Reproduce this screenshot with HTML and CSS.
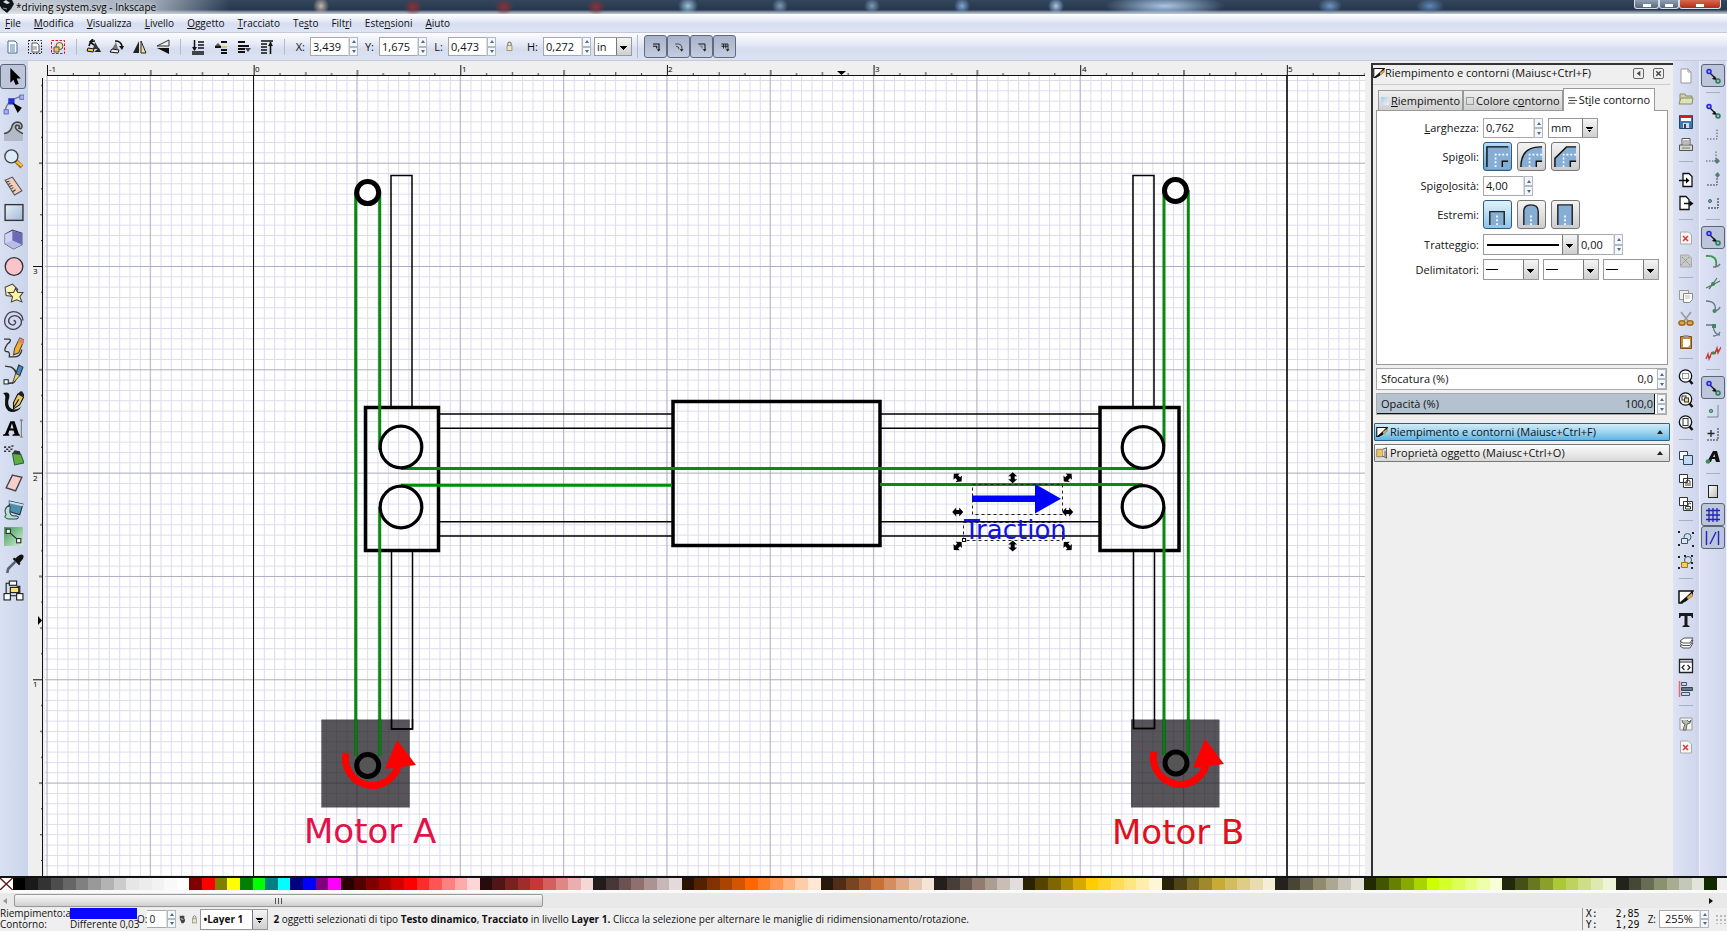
FILE: index.html
```html
<!DOCTYPE html>
<html lang="it">
<head>
<meta charset="utf-8">
<title>*driving system.svg - Inkscape</title>
<link rel="stylesheet" href="styles.css">
</head>
<body>
<svg class="defs" aria-hidden="true">
  <symbol id="i-snap" viewBox="0 0 16 16"><path d="M4 4l9 9" stroke="#111" stroke-width="1.200"/><circle cx="4" cy="3.500" r="2" fill="#aab" stroke="#22d" stroke-width="1.500"/><path d="M11 12l-4-1 3-3z" fill="#111"/><circle cx="13" cy="13" r="2" fill="#9bb" stroke="#2a7a5a" stroke-width="1.500"/></symbol>
  <symbol id="i-pen" viewBox="0 0 16 16"><path d="M1 2h14L4 14H1z" fill="#fff" stroke="#111" stroke-width="1.500"/><path d="M1 14L15 2v5L7 13z" fill="#111"/><path d="M9 8l5-4 1 3-5 4z" fill="#dba94f"/></symbol>
  <symbol id="i-doc" viewBox="0 0 16 16"><path d="M3 1h7l3 3v11H3z" fill="#fff" stroke="#999"/><path d="M10 1v3h3" fill="none" stroke="#999"/></symbol>
  <symbol id="i-mag" viewBox="0 0 16 16"><circle cx="7.500" cy="7" r="6.200" fill="#f5f8fb" stroke="#111" stroke-width="1.300"/><path d="M11.500 11.500l3 3.500" stroke="#111" stroke-width="2.500"/></symbol>
  <symbol id="i-lock" viewBox="0 0 16 16"><path d="M6 7V4q2-3 4 0v3" fill="none" stroke="#777" stroke-width="1.300"/><rect x="5" y="7" width="6" height="6" fill="#efe8b8" stroke="#887" /></symbol>
  <symbol id="i-err" viewBox="0 0 16 16"><path d="M2.500 2h8l3 3v9h-11z" fill="#fbf6f6" stroke="#aaa"/><path d="M5 6l5 5M10 6l-5 5" stroke="#d33" stroke-width="1.500"/></symbol>
</svg>

<header class="title">
  <svg viewBox="0 0 16 14" class="logo"><path d="M0 0h12l2 4-3 5-4 4-5-4-2-3z" fill="#101418"/><path d="M3 2l3-2 4 3-3 1z" fill="#dde"/><path d="M3 8l4 1" stroke="#99a"/></svg>
  <h1>*driving system.svg - Inkscape</h1>
  <div class="winbtns"><button class="wmin" aria-label="Riduci"></button><button class="wmax" aria-label="Ingrandisci"></button><button class="wclose" aria-label="Chiudi"></button></div>
</header>

<nav class="menu">
  <button><u>F</u>ile</button><button><u>M</u>odifica</button><button><u>V</u>isualizza</button><button><u>L</u>ivello</button><button><u>O</u>ggetto</button><button><u>T</u>racciato</button><button>Te<u>s</u>to</button><button>Filt<u>r</u>i</button><button>Este<u>n</u>sioni</button><button><u>A</u>iuto</button>
</nav>

<div class="toolbar">
  <div class="grp">
    <button aria-label="Seleziona tutto"><svg viewBox="0 0 16 16"><path d="M4 2h7l2 2v10H4z" fill="#fff" stroke="#4a6a8a"/><path d="M6 6h5M6 8h5M6 10h5M6 12h5" stroke="#4a88b0"/></svg></button>
    <button aria-label="Seleziona in tutti i livelli"><svg viewBox="0 0 16 16"><rect x="1.500" y="1.500" width="13" height="13" fill="none" stroke="#111" stroke-dasharray="1.500 1.500"/><path d="M5 4h5l2 2v7H5z" fill="#fff" stroke="#555"/><path d="M6 8h4M6 10h4" stroke="#777"/></svg></button>
    <button aria-label="Deseleziona"><svg viewBox="0 0 16 16"><rect x="1.500" y="1.500" width="13" height="13" fill="none" stroke="#d11" stroke-dasharray="2.500 1.500"/><circle cx="9.500" cy="7" r="3.500" fill="#f4e5a0" stroke="#555"/><path d="M4 8h5v5H4z" fill="#f0c060" stroke="#555"/></svg></button>
  </div>
  <div class="grp">
    <button aria-label="Ruota antiorario"><svg viewBox="0 0 16 16"><path d="M9 2q-5 0-6 5M7 0l-3 3 4 3" stroke="#111" stroke-width="1.600" fill="none"/><path d="M9 3l4 7H7z" fill="#333"/><path d="M2 9l6 1-1 3-6-1z" fill="#f0d050" stroke="#111"/><path d="M8 13h7l-2-4z" fill="#222"/></svg></button>
    <button aria-label="Ruota orario"><svg viewBox="0 0 16 16"><path d="M6 2q6 0 7 5" stroke="#111" stroke-width="1.600" fill="none"/><path d="M10 7h5l-2 4z" fill="#111"/><path d="M7 3l-4 7h6z" fill="#777"/><path d="M3 10l7 1-1 3-8-1z" fill="#eee" stroke="#111"/></svg></button>
    <button aria-label="Rifletti orizzontale"><svg viewBox="0 0 16 16"><path d="M7 2v12H1z" fill="#222"/><path d="M9 2v12h5z" fill="#efe09a" stroke="#222"/></svg></button>
    <button aria-label="Rifletti verticale"><svg viewBox="0 0 16 16"><path d="M14 1v6H2z" fill="#eee" stroke="#333"/><path d="M14 15V9H2z" fill="#111"/></svg></button>
  </div>
  <div class="grp">
    <button aria-label="Abbassa in fondo"><svg viewBox="0 0 16 16"><path d="M8 3h6M8 6h6M8 9h6M2 13h12M2 15h12M4.500 1v10" stroke="#111" stroke-width="1.500"/><path d="M2 8h5l-2.500 4z" fill="#111"/></svg></button>
    <button aria-label="Abbassa"><svg viewBox="0 0 16 16"><path d="M8 3h6M2 8h6M8 11h6M8 14h6" stroke="#111" stroke-width="2"/><path d="M8 8h6" stroke="#d8c860" stroke-width="2"/><path d="M5 4l-3 3h6z" fill="#555"/></svg></button>
    <button aria-label="Alza"><svg viewBox="0 0 16 16"><path d="M2 3h7M2 7h11M2 10h7M2 13h7" stroke="#111" stroke-width="1.800"/><path d="M9 9h6l-3 4z" fill="#444"/></svg></button>
    <button aria-label="Alza in cima"><svg viewBox="0 0 16 16"><path d="M2 2h12M2 5h6M2 8h6M2 11h6M2 14h6M11.500 3v12" stroke="#111" stroke-width="1.600"/><path d="M9 7h5l-2.500-4z" fill="#111"/></svg></button>
  </div>
  <label for="fx">X:</label>
  <span class="spin w48"><input id="fx" value="3,439"><span class="sb"><button aria-label="Aumenta"></button><button aria-label="Diminuisci"></button></span></span>
  <label for="fy">Y:</label>
  <span class="spin w48"><input id="fy" value="1,675"><span class="sb"><button aria-label="Aumenta"></button><button aria-label="Diminuisci"></button></span></span>
  <label for="fl">L:</label>
  <span class="spin w48"><input id="fl" value="0,473"><span class="sb"><button aria-label="Aumenta"></button><button aria-label="Diminuisci"></button></span></span>
  <button class="lock" aria-label="Blocca proporzioni"><svg viewBox="0 0 16 16"><use href="#i-lock"/></svg></button>
  <label for="fh">H:</label>
  <span class="spin w48"><input id="fh" value="0,272"><span class="sb"><button aria-label="Aumenta"></button><button aria-label="Diminuisci"></button></span></span>
  <span class="combo unit"><select aria-label="Unità"><option>in</option></select></span>
  <div class="toggles">
    <button aria-label="Scala contorni" aria-pressed="true"><svg viewBox="0 0 16 16"><path d="M4 4h8v7M4 7h5M9 7v3" stroke="#111" stroke-width="1.500" fill="none"/><path d="M9 11h5l-2.500 3z" fill="#111"/></svg></button>
    <button aria-label="Scala raggi" aria-pressed="true"><svg viewBox="0 0 16 16"><path d="M3 4h4q5 0 5 7M4 7q4 0 4 4" stroke="#222" fill="none"/><path d="M9 11h5l-2.500 3z" fill="#111"/></svg></button>
    <button aria-label="Trasforma gradienti" aria-pressed="true"><svg viewBox="0 0 16 16"><path d="M3 4h9v7" stroke="#111" fill="none" stroke-width="1.300"/><path d="M4 6h5v5z" fill="#888"/><path d="M9 11h5l-2.500 3z" fill="#111"/></svg></button>
    <button aria-label="Trasforma motivi" aria-pressed="true"><svg viewBox="0 0 16 16"><path d="M3 4h9v7M3 7h9M6 4v6M9 4v6" stroke="#111" fill="none" stroke-width="1.100"/><path d="M9 11h5l-2.500 3z" fill="#111"/></svg></button>
  </div>
</div>

<main>
  <aside class="toolbox">
    <button class="on" aria-label="Seleziona"><svg viewBox="0 0 20 20"><path d="M7 2v14l3-3 2 5 3-1-2-5h4z" fill="#000"/></svg></button>
    <button aria-label="Nodi"><svg viewBox="0 0 20 20"><path d="M2 18Q2 6 18 2" fill="none" stroke="#777" stroke-width="1.300"/><rect x="5" y="4" width="6" height="6" fill="#2233dd"/><rect x="16" y="1" width="4" height="4" fill="#aab4f4" stroke="#55c" stroke-width=".8"/><rect x="1" y="15" width="4" height="4" fill="#aab4f4" stroke="#55c" stroke-width=".8"/><path d="M9 8l9 5-4 5z" fill="#000"/></svg></button>
    <button aria-label="Ritocco"><svg viewBox="0 0 20 20"><path d="M1 12q5-1 7-5 1-6 6-6 5 1 4 5-1 2-3 1 2-3-2-3-4 3 6 8v7H1z" fill="#a4acb8" opacity=".7"/><path d="M1 12q5-1 7-5 1-6 6-6 5 1 4 5-1 2-3 1 2-3-2-3-4 3 6 8" fill="none" stroke="#444" stroke-width="1.500"/></svg></button>
    <button aria-label="Ingrandimento"><svg viewBox="0 0 20 20"><path d="M12 12l6 6" stroke="#a86a10" stroke-width="4"/><path d="M13 13l5 4" stroke="#f4c440" stroke-width="2"/><circle cx="8" cy="8" r="6.200" fill="#dcebfa" stroke="#444" stroke-width="1.300"/></svg></button>
    <button aria-label="Misura"><svg viewBox="0 0 20 20"><path d="M2 5l7-3 9 13-7 4z" fill="#f2cdbc" stroke="#555"/><path d="M3 7l3-1M5 9l2-1M6 11l3-1M8 13l2-1M9 16l3-2" stroke="#333"/></svg></button>
    <button aria-label="Rettangolo"><svg viewBox="0 0 20 20"><defs><linearGradient id="g1" x2="1" y2="1"><stop stop-color="#e8f1fa"/><stop offset="1" stop-color="#9fb8d2"/></linearGradient></defs><rect x="2" y="2.500" width="17" height="15" fill="url(#g1)" stroke="#333" stroke-width="1.300"/></svg></button>
    <button aria-label="Solido 3D"><svg viewBox="0 0 20 20"><path d="M2 5l7-4 9 3v11l-8 4-8-5z" fill="#a5a5de" stroke="#445"/><path d="M9 2v9l-7 3V5z" fill="#d0d2f4"/><path d="M9 2l9 2v11l-9-4z" fill="#6a6ab8"/><path d="M2 14l7-3 9 4-8 4z" fill="#b9bce8"/></svg></button>
    <button aria-label="Cerchio"><svg viewBox="0 0 20 20"><circle cx="10.500" cy="10" r="8.400" fill="#fac4cc" stroke="#333" stroke-width="1.300"/></svg></button>
    <button aria-label="Stella"><svg viewBox="0 0 20 20"><path d="M2 4l7-3 5 5-3 7-8-1z" fill="#fbf2b8" stroke="#444"/><path d="M12 5l2 4 5 0-3 4 2 5-5-2-5 2 1-5-4-4h5z" fill="#fdf3a0" stroke="#444"/></svg></button>
    <button aria-label="Spirale"><svg viewBox="0 0 20 20"><path d="M10 10q2 0 2 2-1 3-4 2-4-2-2-6 3-4 8-2 5 3 3 8-4 6-10 4Q0 15 2 8 5 0 13 2q6 2 6 8" fill="none" stroke="#445" stroke-width="1.300"/></svg></button>
    <button aria-label="Matita"><svg viewBox="0 0 20 20"><path d="M1 2h5q3 1-2 5-4 6-1 7 4-1 3 5h4q7 0 8-7" fill="none" stroke="#333" stroke-width="1.200"/><path d="M16 1l4 2-5 12-5 2 1-6z" fill="#f2b030" stroke="#543"/><path d="M16 1l4 2-1 4-5-2z" fill="#dd8866"/></svg></button>
    <button aria-label="Tracciati"><svg viewBox="0 0 20 20"><path d="M2 2l6 1q8 5 3 14-3 2-8 1" fill="none" stroke="#333" stroke-width="1.300"/><rect x="1" y="15" width="4" height="4" fill="#fff" stroke="#222"/><path d="M15 1l4 2-3 8-4-1z" fill="#4d87b8" stroke="#234"/><path d="M12 9l4 2-7 8z" fill="#f3d060" stroke="#333" stroke-width=".8"/></svg></button>
    <button aria-label="Pennino"><svg viewBox="0 0 20 20"><path d="M0 2q7-2 6 4-3 8 2 11 6 2 10-3-3 6-10 6Q1 19 2 8 3 4 0 2z" fill="#111"/><path d="M18 1l2 4-4 8-6 4 0-6 4-8z" fill="#e8c860" stroke="#111"/><path d="M14 3l5 3 1-3-3-3z" fill="#222"/><path d="M15 8l-5 8" stroke="#111"/></svg></button>
    <button aria-label="Testo"><svg viewBox="0 0 20 20"><path fill-rule="evenodd" d="M0 17v-1l2-1L7 3h4l4 12 1 1v1H9v-1l2-1-1-3H6l-1 3 1 1v1zM7 10h3L8.500 5z" fill="#000"/><path d="M17.500 2v16M16 2h3M16 18h3" stroke="#777"/></svg></button>
    <button aria-label="Spray"><svg viewBox="0 0 20 20"><path d="M9 8l8 1 3 8-9 2z" fill="#5fae3f" stroke="#264"/><path d="M9 8l2-3 5 1 1 3z" fill="#333"/><path d="M1 2h2M5 2h2M3 4h2M7 4h2M1 6h2M5 6h2M8 1h2" stroke="#333" stroke-width="1.500"/></svg></button>
    <button aria-label="Gomma"><svg viewBox="0 0 20 20"><path d="M9 3l9 2-6 13-9-3z" fill="#f5cfcb" stroke="#444" stroke-width="1.300"/></svg></button>
    <button aria-label="Secchiello"><svg viewBox="0 0 20 20"><path d="M6 2l13 3-3 10-10-3z" fill="#4f8fae" stroke="#234"/><path d="M6 6q-6 3-3 9-3 3 2 4h8q4-2-1-3-7 1-5-8z" fill="#b7e0cf" stroke="#345"/><path d="M6 3l13 3" stroke="#cde" stroke-width="2"/></svg></button>
    <button aria-label="Gradiente"><svg viewBox="0 0 20 20"><defs><linearGradient id="g2" x2="1" y2="1"><stop stop-color="#3a9a50"/><stop offset="1" stop-color="#d8f0dc"/></linearGradient></defs><rect x="1" y="1" width="18" height="18" fill="url(#g2)"/><path d="M6 6l8 7" stroke="#222"/><rect x="3" y="3" width="4" height="4" fill="#fff" stroke="#222"/><rect x="13" y="12" width="4" height="4" fill="#fff" stroke="#222"/></svg></button>
    <button aria-label="Contagocce"><svg viewBox="0 0 20 20"><path d="M13 4q4-4 6-2t-2 6l-2 2-4-4z" fill="#111"/><path d="M10 5l6 6" stroke="#111" stroke-width="2"/><path d="M12 8l-7 7-1 4" stroke="#567" stroke-width="2.500" fill="none"/></svg></button>
    <button aria-label="Connettori"><svg viewBox="0 0 20 20"><path d="M3 13V3h3M16 13V6h-3M7 15h6" stroke="#111" fill="none"/><rect x="6" y="1" width="7" height="4" fill="#fff" stroke="#111"/><rect x="7" y="7" width="8" height="5" fill="#f8e070" stroke="#111"/><rect x="1" y="13" width="6" height="6" fill="#fff" stroke="#111"/><rect x="13" y="13" width="6" height="6" fill="#fff" stroke="#111"/></svg></button>
  </aside>

  <section class="work">
    <svg class="hruler">
      <defs>
        <pattern id="ht" patternUnits="userSpaceOnUse" x="47" y="64" width="206.640" height="12"><path d="M.5 1v10M103.800 6v5" stroke="#111"/><path d="M26.300 9v2M52.200 8v3M78 9v2M129.600 9v2M155.500 8v3M181.300 9v2" stroke="#333"/></pattern>
      </defs>
      <g transform="translate(-28 -64)">
        <rect x="47" y="64" width="4000" height="12" fill="url(#ht)"/><path d="M47 75.500h4000" stroke="#111"/>
        <g class="rt"><text x="49" y="72">-1</text><text x="255" y="72">0</text><text x="462" y="72">1</text><text x="668" y="72">2</text><text x="875" y="72">3</text><text x="1082" y="72">4</text><text x="1288" y="72">5</text></g>
        <path d="M837 71h9l-4.500 4z" fill="#000"/>
      </g>
    </svg>
    <div class="workrow">
    <svg class="vruler">
      <defs>
        <pattern id="vt" patternUnits="userSpaceOnUse" x="33" y="266" width="10" height="206.640"><path d="M0 .5h10M6 103.800h4" stroke="#111"/><path d="M8 26.300h2M7 52.200h3M8 78h2M8 129.600h2M7 155.500h3M8 181.300h2" stroke="#333"/></pattern>
      </defs>
      <g transform="translate(-28 -76)">
        <rect x="33" y="76" width="10" height="4000" fill="url(#vt)"/><path d="M42.500 78v4000" stroke="#111"/>
        <g class="rt"><text x="33" y="274">3</text><text x="33" y="481">2</text><text x="33" y="687">1</text></g>
        <path d="M38 616v9l4-4.500z" fill="#000"/>
      </g>
    </svg>
    <svg class="canvas" role="img" aria-label="Disegno: driving system">
      <defs>
        <pattern id="minor" patternUnits="userSpaceOnUse" x="253.500" y="266" width="10.332" height="10.332"><path d="M0 .5h10.332M.5 0v10.332" stroke="#6868b0" stroke-opacity=".24"/></pattern>
        <pattern id="major" patternUnits="userSpaceOnUse" x="253" y="266" width="103.320" height="103.320"><path d="M0 .5h103.320M.5 0v103.320" stroke="#404055" stroke-opacity=".3"/></pattern>
        <g id="motor">
          <path d="M1154 752A26.500 26.500 0 1 0 1206.500 763" fill="none" stroke="#f00" stroke-width="7"/>
          <path d="M1205 739l-12 29 31-4z" fill="#f00"/>
        </g>
        <path id="hnd" d="M-5.500 0l4-4.500v2.500h3v-2.500l4 4.500-4 4.500v-2.500h-3v2.500z"/>
      </defs>
      <g transform="translate(-45 -76)">
        <rect x="45" y="76" width="4000" height="4000" fill="url(#minor)"/>
        <rect x="45" y="76" width="4000" height="4000" fill="url(#major)"/>
        <path d="M253.500 76v4000" stroke="#111"/><path d="M1287 76v4000" stroke="#333" stroke-width="2"/>
        <g fill="none" stroke="#000" stroke-width="1.500">
          <path d="M391 406V175.500h21V406M391.500 552v177h21V552M1133 407V175.500h21V407M1133.500 552v176.500h21V552"/>
          <path d="M440 414h232M440 428.300h232M440 521.700h232M440 536h232M880 414h219M880 428.300h219M880 521.700h219M880 536h219"/>
        </g>
        <g fill="none" stroke="#000" stroke-width="3.500">
          <rect x="365.500" y="407.500" width="73" height="143"/><rect x="1100" y="407.500" width="79" height="143"/><rect x="673" y="401.500" width="207" height="144"/>
        </g>
        <g fill="none" stroke="#068a10" stroke-width="3">
          <path d="M355.700 192v564M379.700 192v258M379.700 507v249M1164 190v256M1164 507v248M1188.300 190v565"/>
          <path d="M401 468.400h742M401 485.200h271M880 484.600h263"/>
        </g>
        <g fill="none" stroke="#000" stroke-width="3.200">
          <circle cx="401" cy="447" r="20.800"/><circle cx="401" cy="507" r="20.800"/><circle cx="1143" cy="447.500" r="20.800"/><circle cx="1143" cy="506.500" r="20.800"/>
        </g>
        <path d="M321.300 719.500h88.500v88h-88.500zM1131 719.500h88.500v88H1131z" fill="#1c1a20" fill-opacity=".74"/>
        <path d="M391.500 719v10h21v-10M1133.500 719v9.500h21V719" fill="none" stroke="#000" stroke-width="1.500"/>
        <path d="M355.700 719v37M379.700 719v37M1164 719v36M1188.300 719v36" stroke="#0a7a12" stroke-width="3"/>
        <use href="#motor"/><use href="#motor" x="-808" y="1"/>
        <g stroke="#000" stroke-width="5">
          <circle cx="367.700" cy="192.600" r="11" fill="#fff"/><circle cx="1175.500" cy="190.500" r="11" fill="#fff"/><circle cx="367.700" cy="765.500" r="11" fill="#555"/><circle cx="1176" cy="763" r="11" fill="#555"/>
        </g>
        <g class="dj"><text x="304" y="843" font-size="34" fill="#e41048">Motor A</text><text x="1112" y="844" font-size="34" fill="#e0101c">Motor B</text><text x="964" y="539" font-size="26" fill="#1212e6">Traction</text></g>
        <path d="M972 495.500h63V484l26 14.700-26 14.700v-11.500h-63z" fill="#00f"/>
        <path d="M972.500 484.500h90v30h-90zM963.500 522.500h99v18h-99z" fill="none" stroke="#222" stroke-dasharray="3 3"/>
        <rect x="962.500" y="538.500" width="3" height="3" fill="#fff" stroke="#000"/>
        <g>
          <use href="#hnd" transform="translate(957.700 477.700) rotate(45)"/><use href="#hnd" transform="translate(1012.700 477.700) rotate(90)"/><use href="#hnd" transform="translate(1067.700 477.700) rotate(-45)"/>
          <use href="#hnd" transform="translate(957.700 512)"/><use href="#hnd" transform="translate(1067.700 512)"/>
          <use href="#hnd" transform="translate(957.700 546) rotate(-45)"/><use href="#hnd" transform="translate(1012.700 546) rotate(90)"/><use href="#hnd" transform="translate(1067.700 546) rotate(45)"/>
        </g>
      </g>
    </svg>
    </div>
  </section>

  <section class="dock">
    <header class="dhead"><svg viewBox="0 0 16 16"><use href="#i-pen"/></svg><h2>Riempimento e contorni (Maiusc+Ctrl+F)</h2><button class="mini" aria-label="Riduci pannello"><svg viewBox="0 0 10 10"><path d="M7 2v6L3 5z" fill="#444"/></svg></button><button class="mini" aria-label="Chiudi pannello"><svg viewBox="0 0 10 10"><path d="M2.500 2.500l5 5M7.500 2.500l-5 5" stroke="#444" stroke-width="1.600"/></svg></button></header>
    <div class="tabs" role="tablist">
      <button role="tab"><i class="sw fill"></i><span><u>R</u>iempimento</span></button>
      <button role="tab"><i class="sw"></i><span>Colore c<u>o</u>ntorno</span></button>
      <button role="tab" class="cur" aria-selected="true"><svg viewBox="0 0 10 10"><path d="M0 2h8M1 5h9M0 8h8" stroke="#333"/></svg><span>St<u>i</u>le contorno</span></button>
    </div>
    <div class="page">
      <div class="row h20"><label for="lw"><u>L</u>arghezza:</label><span class="spin w60"><input id="lw" value="0,762"><span class="sb"><button aria-label="Aumenta"></button><button aria-label="Diminuisci"></button></span></span><span class="combo w50"><select aria-label="Unità larghezza"><option>mm</option></select></span></div>
      <div class="row h29"><span class="lab">Spigoli:</span>
        <button class="opt sel" aria-label="Spigolo vivo" aria-pressed="true"><svg viewBox="0 0 26 26"><path d="M2 26V2h24v24z" fill="#86add4"/><path d="M2 24V3h22M18 24v-6h6" fill="none" stroke="#111" stroke-width="1.500"/><path d="M11 24V11h13" fill="none" stroke="#fff" stroke-width="1.800" stroke-dasharray="2 2"/></svg></button>
        <button class="opt" aria-label="Spigolo arrotondato"><svg viewBox="0 0 26 26"><path d="M2 24Q2 3 22 3h2v15h-6v6z" fill="#86add4"/><path d="M2 24Q2 3 22 3h2M18 24v-6h6" fill="none" stroke="#111" stroke-width="1.500"/><path d="M11 24V11h13" fill="none" stroke="#fff" stroke-width="1.800" stroke-dasharray="2 2"/></svg></button>
        <button class="opt" aria-label="Spigolo tagliato"><svg viewBox="0 0 26 26"><path d="M2 24v-9L14 3h10v15h-6v6z" fill="#86add4"/><path d="M2 24v-9L14 3h10M18 24v-6h6" fill="none" stroke="#111" stroke-width="1.500"/><path d="M11 24V11h13" fill="none" stroke="#fff" stroke-width="1.800" stroke-dasharray="2 2"/></svg></button></div>
      <div class="row h20"><label for="ml">Spigo<u>l</u>osità:</label><span class="spin w50"><input id="ml" value="4,00"><span class="sb"><button aria-label="Aumenta"></button><button aria-label="Diminuisci"></button></span></span></div>
      <div class="row h29"><span class="lab">Estremi:</span>
        <button class="opt sel light" aria-label="Estremo geometrico" aria-pressed="true"><svg viewBox="0 0 26 26"><path d="M5 24V10h15v14" fill="#86add4" stroke="#222" stroke-width="1.500"/><path d="M12.500 24V12" stroke="#fff" stroke-width="1.800" stroke-dasharray="2 2"/></svg></button>
        <button class="opt" aria-label="Estremo arrotondato"><svg viewBox="0 0 26 26"><path d="M5 24V10q0-7 7.500-7T20 10v14" fill="#86add4" stroke="#222" stroke-width="1.500"/><path d="M12.500 24V12" stroke="#fff" stroke-width="1.800" stroke-dasharray="2 2"/></svg></button>
        <button class="opt" aria-label="Estremo squadrato"><svg viewBox="0 0 26 26"><path d="M5 24V3h15v21" fill="#86add4" stroke="#222" stroke-width="1.500"/><path d="M12.500 24V12" stroke="#fff" stroke-width="1.800" stroke-dasharray="2 2"/></svg></button></div>
      <div class="row h21"><span class="lab">Tratteggio:</span><span class="combo w95 line"><select aria-label="Tratteggio"><option></option></select></span><span class="spin w45"><input aria-label="Scostamento" value="0,00"><span class="sb"><button aria-label="Aumenta"></button><button aria-label="Diminuisci"></button></span></span></div>
      <div class="row h21"><span class="lab">Delimitatori:</span><span class="combo w56 dash"><select aria-label="Inizio"><option></option></select></span><span class="combo w56 dash"><select aria-label="Medio"><option></option></select></span><span class="combo w56 dash"><select aria-label="Fine"><option></option></select></span></div>
    </div>
    <div class="slider"><label for="bl">Sfocatura (%)</label><input id="bl" value="0,0"><span class="sb"><button aria-label="Aumenta"></button><button aria-label="Diminuisci"></button></span></div>
    <div class="slider full"><label for="op">Opacità (%)</label><input id="op" value="100,0"><span class="sb"><button aria-label="Aumenta"></button><button aria-label="Diminuisci"></button></span></div>
    <button class="dtab act"><svg viewBox="0 0 16 16"><use href="#i-pen"/></svg><span>Riempimento e contorni (Maiusc+Ctrl+F)</span><b></b></button>
    <button class="dtab"><svg viewBox="0 0 16 16"><path d="M1 3h8v10H1z" fill="#f0c850" stroke="#765"/><path d="M9 3l5-2v14l-5-3M12 5v8" fill="#ddd" stroke="#333"/></svg><span>Proprietà oggetto (Maiusc+Ctrl+O)</span><b></b></button>
  </section>

  <aside class="bar">
    <button aria-label="Nuovo"><svg viewBox="0 0 16 16"><use href="#i-doc"/></svg></button>
    <button aria-label="Apri"><svg viewBox="0 0 16 16"><path d="M2 12V3h5l1 2h6v3" fill="#cfd3a4" stroke="#8a8d66"/><path d="M1 13l2-6h12l-1 6z" fill="#dfe3b4" stroke="#8a8d66"/></svg></button>
    <button aria-label="Salva"><svg viewBox="0 0 16 16"><path d="M1.500 1.500h13v13h-13z" fill="#3f78b8" stroke="#246"/><path d="M3 2h10v5H3z" fill="#fff"/><path d="M2 1h12v3H2z" fill="#c22"/><path d="M5 9h6v5H5z" fill="#ddd"/><path d="M6 10h2v4H6z" fill="#246"/></svg></button>
    <button aria-label="Stampa"><svg viewBox="0 0 16 16"><path d="M4 8V1.500h8V8" fill="#fff" stroke="#555"/><path d="M1.500 8h13v5.500h-13z" fill="#d8d8d0" stroke="#555"/><path d="M4 11h8M5 4h6M5 6h6" stroke="#777"/></svg></button>
    <hr>
    <button aria-label="Importa"><svg viewBox="0 0 16 16"><path d="M5 1.500h6l3 3v10H5z" fill="#fff" stroke="#111" stroke-width="1.300"/><path d="M1 8.500h8" stroke="#111" stroke-width="1.500"/><path d="M8 5.500l3.500 3-3.500 3z"/></svg></button>
    <button aria-label="Esporta"><svg viewBox="0 0 16 16"><path d="M2 1.500h6l3 3v10H2z" fill="#fff" stroke="#111" stroke-width="1.300"/><path d="M6 8.500h7" stroke="#111" stroke-width="1.500"/><path d="M11.500 5.500l4 3-4 3z"/></svg></button>
    <hr>
    <button aria-label="Annulla"><svg viewBox="0 0 16 16"><use href="#i-err"/></svg></button>
    <button aria-label="Ripeti"><svg viewBox="0 0 16 16"><path d="M2.500 2h8l3 3v9h-11z" fill="#c8c8c8" stroke="#aaa"/><path d="M4 4l9 9M3 12l8-8" stroke="#888" stroke-dasharray="1.500 1"/></svg></button>
    <hr>
    <button aria-label="Copia"><svg viewBox="0 0 16 16"><path d="M1.500 2.500h9v9h-9z" fill="#eee" stroke="#999"/><path d="M5.500 5.500h9v6l-3 3h-6z" fill="#fff" stroke="#888"/><path d="M7 8h5M7 10h5" stroke="#bbb"/></svg></button>
    <button aria-label="Taglia"><svg viewBox="0 0 16 16"><path d="M3 1l7 9M13 1L6 10" stroke="#999" stroke-width="1.600"/><ellipse cx="4" cy="12" rx="3" ry="2.200" fill="#d9a860" stroke="#a26a14" stroke-width="1.600"/><ellipse cx="12" cy="12" rx="3" ry="2.200" fill="#d9a860" stroke="#a26a14" stroke-width="1.600"/></svg></button>
    <button aria-label="Incolla"><svg viewBox="0 0 16 16"><path d="M2.500 2.500h11v12h-11z" fill="#c58a3a" stroke="#7a4a12"/><path d="M5 5h7v6l-2 2H5z" fill="#fff"/><path d="M5.500 1h5v2.500h-5z" fill="#999"/></svg></button>
    <hr>
    <button aria-label="Zoom selezione"><svg viewBox="0 0 16 16"><use href="#i-mag"/><rect x="4.500" y="4.500" width="6" height="5" fill="none" stroke="#333" stroke-dasharray="1 1"/></svg></button>
    <button aria-label="Zoom disegno"><svg viewBox="0 0 16 16"><use href="#i-mag"/><rect x="4" y="4" width="4" height="4" fill="#fff" stroke="#333"/><rect x="6.500" y="6" width="4" height="4" fill="#f0dc70" stroke="#333"/></svg></button>
    <button aria-label="Zoom pagina"><svg viewBox="0 0 16 16"><use href="#i-mag"/><rect x="5" y="3.500" width="5" height="7" fill="#fff" stroke="#333"/></svg></button>
    <hr>
    <button aria-label="Duplica"><svg viewBox="0 0 16 16"><path d="M1.500 1.500h8v8h-8z" fill="#fff" stroke="#345"/><path d="M5.500 5.500h9v9h-9z" fill="#c2dbf2" stroke="#246"/></svg></button>
    <button aria-label="Clona"><svg viewBox="0 0 16 16"><path d="M1.500 1.500h8v8h-8zM5.500 5.500h9v9h-9z" fill="#fff" stroke="#333"/><path d="M8 10V8q2-2 4 0v2" fill="none" stroke="#333"/><path d="M7 10h6v3H7z" fill="#a98"/></svg></button>
    <button aria-label="Scollega clone"><svg viewBox="0 0 16 16"><path d="M1.500 1.500h8v8h-8zM5.500 5.500h9v9h-9z" fill="#fff" stroke="#333"/><path d="M10 10V8q2-2 3 0" fill="none" stroke="#333"/><path d="M7.500 10.500h5v2.500h-5z" fill="#eee" stroke="#333"/></svg></button>
    <hr>
    <button aria-label="Raggruppa"><svg viewBox="0 0 16 16"><path d="M0 0h2v2H0zM14 1h2v2h-2zM0 13h2v2H0zM14 14h2v2h-2z" fill="#222"/><circle cx="9.500" cy="6" r="3.500" fill="#cfe0f0" stroke="#456"/><path d="M3.500 7.500h6v5h-6z" fill="#dbe6f2" stroke="#456"/></svg></button>
    <button aria-label="Dividi gruppo"><svg viewBox="0 0 16 16"><path d="M0 2h2v2H0zM6 1h2v2H6zM13 1h2v2h-2zM0 13h2v2H0zM13 13h2v2h-2zM13 8h2v2h-2z" fill="#222"/><circle cx="10" cy="6" r="3.500" fill="#cfe0f0" stroke="#456"/><path d="M3.500 8.500h6v5h-6z" fill="#f0d060" stroke="#a70"/></svg></button>
    <hr>
    <button aria-label="Riempimento e contorni"><svg viewBox="0 0 16 16"><use href="#i-pen"/></svg></button>
    <button aria-label="Testo e carattere"><svg viewBox="0 0 16 16"><path d="M1 1h14v5h-1l-1-2H9.500v9l2 1v1h-7v-1l2-1V4H3L2 6H1z" fill="#1a1a1a"/></svg></button>
    <button aria-label="Livelli"><svg viewBox="0 0 16 16"><path d="M2 11l4-3h9l-3 5H5z" fill="#fff" stroke="#555"/><path d="M2 8.500l4-3h9l-3 5H5z" fill="#fff" stroke="#555"/><path d="M2 6l4-3h9l-3 5H5z" fill="#fff" stroke="#555"/></svg></button>
    <button aria-label="Editor XML"><svg viewBox="0 0 16 16"><path d="M1.500 1.500h13v13h-13z" fill="#fff" stroke="#222" stroke-width="1.300"/><path d="M1 4h14" stroke="#222"/><path d="M6.500 7L4 9.500 6.500 12M9.500 7L12 9.500 9.500 12" fill="none" stroke="#222" stroke-width="1.200"/></svg></button>
    <button aria-label="Allinea"><svg viewBox="0 0 16 16"><path d="M1.500 0v16" stroke="#e66" stroke-width="1.500"/><path d="M3.500 1.500h5v3h-5zM3.500 11.500h8v3h-8z" fill="#cdd8e8" stroke="#456"/><path d="M3.500 6.500h11v3h-11z" fill="#678" stroke="#345"/></svg></button>
    <hr>
    <button aria-label="Preferenze"><svg viewBox="0 0 16 16"><path d="M2 2h12v12H2z" fill="#f4f4ee" stroke="#999"/><path d="M4 4q0 4 3 4l-2 6h3l1-6q4 0 4-4l-2 2-2-2" fill="#b8bcae" stroke="#666"/></svg></button>
    <button aria-label="Proprietà documento"><svg viewBox="0 0 16 16"><use href="#i-err"/></svg></button>
  </aside>

  <aside class="bar snap">
    <button class="on" aria-label="Aggancio"><svg viewBox="0 0 16 16"><use href="#i-snap"/></svg></button>
    <hr>
    <button aria-label="Riquadri"><svg viewBox="0 0 16 16"><use href="#i-snap"/></svg></button>
    <button aria-label="Bordi riquadri"><svg viewBox="0 0 16 16"><path d="M2 13h10V3" fill="none" stroke="#555" stroke-dasharray="1.500 1.500"/></svg></button>
    <button aria-label="Angoli riquadri"><svg viewBox="0 0 16 16"><path d="M1 12h10V2" fill="none" stroke="#555" stroke-dasharray="1.500 1.500"/><path d="M12 9l3 3-3 3-3-3z" fill="#587a78"/></svg></button>
    <button aria-label="Punti medi bordi"><svg viewBox="0 0 16 16"><path d="M2 13h10V5" fill="none" stroke="#444" stroke-dasharray="2 1"/><path d="M12.500 0l2.500 3-2.500 3L10 3z" fill="#587a78"/></svg></button>
    <button aria-label="Centri riquadri"><svg viewBox="0 0 16 16"><path d="M3 13h10V3" fill="none" stroke="#222" stroke-dasharray="2 1"/><circle cx="5" cy="6" r="1.500" fill="#8aa" stroke="#466"/></svg></button>
    <hr>
    <button class="on" aria-label="Nodi e tracciati"><svg viewBox="0 0 16 16"><use href="#i-snap"/></svg></button>
    <button aria-label="Aggancia a tracciati"><svg viewBox="0 0 16 16"><path d="M1 3q12-1 10 10" fill="none" stroke="#3a9a4a" stroke-width="1.800"/><path d="M8 14q5 0 7-3" fill="none" stroke="#777" stroke-width="1.500"/></svg></button>
    <button aria-label="Intersezioni"><svg viewBox="0 0 16 16"><path d="M1 12L15 5M4 13Q8 8 12 2" stroke="#5a7a66" stroke-width="1.300" fill="none"/><circle cx="8" cy="8" r="2" fill="#3a8a4a"/></svg></button>
    <button aria-label="Nodi angolari"><svg viewBox="0 0 16 16"><path d="M1 2q11 0 9 10 4-1 5-4" fill="none" stroke="#678" stroke-width="1.300"/><circle cx="9.500" cy="12" r="2" fill="#3a8a5a"/></svg></button>
    <button aria-label="Nodi curvi"><svg viewBox="0 0 16 16"><path d="M1 3h7q1 10 7 10" fill="none" stroke="#678" stroke-width="1.300"/><path d="M8 14q5 0 7-4" fill="none" stroke="#678" stroke-width="1.300"/><rect x="7" y="2" width="4" height="4" fill="#3a8a5a"/></svg></button>
    <button aria-label="Punti medi"><svg viewBox="0 0 16 16"><path d="M1 14l2-5 1 5 3-7M3 12h3M10 9l2-6 1 5 3-6M10 6l5-1" fill="none" stroke="#c33" stroke-width="1.300"/><circle cx="8.500" cy="8" r="1.800" fill="#3a8a4a"/></svg></button>
    <hr>
    <button class="on" aria-label="Altri punti"><svg viewBox="0 0 16 16"><use href="#i-snap"/></svg></button>
    <button aria-label="Centri oggetti"><svg viewBox="0 0 16 16"><path d="M2 14h11V2" fill="none" stroke="#789"/><circle cx="6" cy="8" r="1.700" fill="#7a9" stroke="#385"/></svg></button>
    <button aria-label="Centri rotazione"><svg viewBox="0 0 16 16"><path d="M2 14h11V2" fill="none" stroke="#333" stroke-dasharray="2 1"/><path d="M6 4v7M2.500 7.500h7" stroke="#222" stroke-width="1.300"/></svg></button>
    <button aria-label="Linee base testo"><svg viewBox="0 0 16 16"><path fill-rule="evenodd" d="M2 13L8 2h4l3 11h-4l-1-3H7l-1 3zM8 8h2L9.500 5z" fill="#111"/><circle cx="3" cy="12.500" r="2.300" fill="#3a8a5a"/></svg></button>
    <hr>
    <button aria-label="Bordo pagina"><svg viewBox="0 0 16 16"><defs><linearGradient id="g3" x2="1" y2="1"><stop stop-color="#fff"/><stop offset="1" stop-color="#bbb"/></linearGradient></defs><rect x="3.500" y="1.500" width="9" height="12" fill="url(#g3)" stroke="#222"/></svg></button>
    <button class="on" aria-label="Griglie"><svg viewBox="0 0 16 16"><path d="M1 3.500h14M1 8h14M1 12.500h14M4 1v14M8 1v14M12 1v14" stroke="#2222bb" stroke-width="1.300"/></svg></button>
    <button class="on" aria-label="Guide"><svg viewBox="0 0 16 16"><path d="M1.500 1v14M13.500 1v14M5 14l6-12" stroke="#2222cc" stroke-width="1.400"/></svg></button>
  </aside>
</main>

<div class="palette" id="palette"><button class="none" aria-label="Nessuno"><svg viewBox="0 0 12 12" preserveAspectRatio="none"><path d="M0 0l12 12M12 0L0 12" stroke="#5a1414" stroke-width="1.300"/></svg></button></div>

<div class="hscroll"><i class="al"></i><div class="track"><div class="thumb"><i></i><i></i><i></i></div></div><i class="ar"></i></div>

<footer>
  <dl class="style"><dt>Riempimento:a</dt><dd class="blue"></dd><dt>Contorno:</dt><dd>Differente 0,03</dd></dl>
  <label for="so">O:</label><span class="spin opac"><input id="so" value="0"><span class="sb"><button aria-label="Aumenta"></button><button aria-label="Diminuisci"></button></span></span>
  <button class="ico" aria-label="Visibilità livello"><svg viewBox="0 0 12 12"><path d="M3 2h5v3q2 3-1 5H5Q2 6 3 2z" fill="#444"/><path d="M4 5l3 1" stroke="#ddd"/></svg></button>
  <button class="ico" aria-label="Blocca livello"><svg viewBox="0 0 16 16"><use href="#i-lock"/></svg></button>
  <span class="combo layer"><select aria-label="Livello corrente"><option>•Layer 1</option></select></span>
  <p><b>2</b> oggetti selezionati di tipo <b>Testo dinamico</b>, <b>Tracciato</b> in livello <b>Layer 1.</b> Clicca la selezione per alternare le maniglie di ridimensionamento/rotazione.</p>
  <div class="coords"><span>X:</span><span>2,85</span><span>Y:</span><span>1,29</span></div>
  <label for="zz">Z:</label><span class="spin w50 zoom"><input id="zz" value="255%"><span class="sb"><button aria-label="Aumenta"></button><button aria-label="Diminuisci"></button></span></span>
  <span class="grip"></span>
</footer>
<script src="palette.js"></script>
</body>
</html>
```
FILE: styles.css
```css
* { box-sizing: border-box; }
body {
  margin: 0; height: 100vh; display: flex; flex-direction: column; overflow: hidden;
  font: 11px/14px "Open Sans", "Noto Sans", sans-serif; color: #111; background: #efefef;
}
button, input, select { font: inherit; color: inherit; margin: 0; padding: 0; border: 0; background: none; }
svg { display: block; }
u { text-underline-offset: 1px; }
.defs { position: absolute; width: 0; height: 0; }
h1, h2, p, dl, dd { margin: 0; font-size: inherit; font-weight: inherit; }

.title {
  height: 14px; flex: none; display: flex; align-items: center;
  background:
    linear-gradient(90deg, rgba(230,234,240,.85), rgba(200,208,218,.75) 150px, transparent 230px),
    radial-gradient(8px 9px at 321px 6px, #c9b4a8, transparent), radial-gradient(10px 8px at 413px 7px, #8c3038, transparent),
    radial-gradient(10px 8px at 504px 7px, #8c3038, transparent), radial-gradient(10px 8px at 596px 7px, #8c3038, transparent),
    radial-gradient(10px 9px at 688px 6px, #9dc3dd, transparent), radial-gradient(8px 8px at 780px 6px, #7f9ab8, transparent),
    radial-gradient(8px 8px at 872px 6px, #7f9ab8, transparent), radial-gradient(8px 8px at 962px 6px, #7fa8d8, transparent),
    radial-gradient(8px 8px at 1056px 6px, #a8c8e8, transparent), radial-gradient(60px 12px at 1165px 6px, #a9c6e6, transparent),
    radial-gradient(12px 8px at 1330px 6px, #6f93c0, transparent), radial-gradient(14px 8px at 1430px 6px, #5f86b8, transparent),
    linear-gradient(#33465c, #26384e 70%, #8795a6 85%, #c4ccd8);
}
.logo { width: 16px; height: 14px; }
.title h1 { flex: 1; line-height: 14px; height: 14px; color: #000; text-shadow: 0 0 4px #fff; font-size: 10px; }
.winbtns { display: flex; align-self: flex-start; margin-right: 6px; }
.winbtns button { height: 9px; width: 25px; border: 1px solid #d5dde8; border-top: 0; background: linear-gradient(#8fa0b4, #56677c); border-radius: 0 0 3px 3px; }
.winbtns .wmax { width: 20px; }
.winbtns .wclose { width: 42px; background: linear-gradient(#d8694f, #b02c14); }
.winbtns button::after { content: ""; display: block; width: 8px; height: 3px; margin: 2px auto 0; background: #fff; }

.menu { height: 19px; flex: none; display: flex; align-items: center; gap: 13px; padding-left: 5px; font-size: 10px; background: linear-gradient(#fff, #e8ecf7 35%, #d6def0 55%, #dfe5f4); border-bottom: 1px solid #c3c9d6; }

.toolbar { height: 28px; flex: none; display: flex; align-items: center; background: linear-gradient(#fbfcfe, #e6eaf6 40%, #d5ddef 60%, #dce2f2); border-bottom: 1px solid #c3c9d6; }
.grp { display: flex; padding: 0 7px 0 0; border-right: 1px solid #b4bac8; }
.grp + .grp { padding-left: 5px; padding-right: 6px; }
.grp button { width: 23px; display: grid; place-items: center; }
.grp svg { width: 16px; height: 16px; }
.toolbar label { width: 21px; text-align: right; padding-right: 5px; }
.grp + label { width: 25px; }
.toolbar .spin { height: 19px; }
.lock { width: 26px; display: grid; place-items: center; }
.lock svg { width: 13px; height: 13px; }
.unit { width: 38px; height: 19px; margin-left: 3px; }
.toggles { display: flex; margin-left: 5px; padding-left: 6px; border-left: 1px solid #b4bac8; }
.toggles button { width: 23px; height: 23px; display: grid; place-items: center; border: 1px solid #626a7e; border-radius: 3px; background: linear-gradient(#a9b3c9, #c3cce0); }
.toggles svg { width: 12px; height: 12px; }

.spin { display: inline-flex; flex: none; }
.spin input { flex: 1; min-width: 0; background: #fff; border: 1px solid #a8a8a8; border-right-color: #ddd; padding-left: 2px; }
.sb { display: flex; flex-direction: column; width: 9px; flex: none; }
.sb button { flex: 1; border: 1px solid #b3b9c2; background: #f6f7f9; display: grid; place-items: center; min-height: 0; }
.sb button::after { content: ""; border: 2px solid transparent; border-top: 0; border-bottom: 3px solid #4a6a9a; }
.sb button + button::after { border-bottom: 0; border-top: 3px solid #4a6a9a; }
.w45 { width: 45px; } .w48 { width: 48px; } .w50 { width: 50px; } .w56 { width: 56px; } .w60 { width: 60px; } .w95 { width: 95px; }

.combo { display: inline-flex; flex: none; position: relative; background: #fff; border: 1px solid #999; }
.combo select { appearance: none; width: 100%; padding: 0 15px 0 2px; outline: 0; }
.combo::after {
  content: ""; position: absolute; right: 0; top: 0; bottom: 0; width: 14px; border-left: 1px solid #777; pointer-events: none;
  background: linear-gradient(#000, #000) 3px 48%/7px 1px no-repeat, linear-gradient(#000, #000) 4px 55%/5px 1px no-repeat, linear-gradient(#000, #000) 5px 62%/3px 1px no-repeat, linear-gradient(#000, #000) 6px 69%/1px 1px no-repeat, linear-gradient(#f5f5f5, #cfcfcf);
}
.line select { background: linear-gradient(#000, #000) 3px 50%/72px 2px no-repeat; }
.dash select { background: linear-gradient(#000, #000) 2px 50%/12px 1px no-repeat; }

main { flex: 1; min-height: 0; display: flex; }
.toolbox { width: 28px; flex: none; padding-top: 3px; background: linear-gradient(90deg, #d8e0f2, #cbd5ea); overflow: hidden; }
.toolbox button { display: grid; place-items: center; width: 26px; height: 27px; }
.toolbox svg { width: 21px; height: 21px; }
.toolbox .on, .bar .on { border: 1px solid #5c6478; border-radius: 3px; background: #bcc5da; }
.toolbox .on { height: 25px; margin-bottom: 2px; }

.work { flex: 1; min-width: 0; padding: 3px 6px 0 0; display: flex; flex-direction: column; }
.hruler { width: 100%; height: 12px; flex: none; }
.workrow { flex: 1; min-height: 0; display: flex; }
.vruler { width: 17px; height: 100%; flex: none; }
.canvas { flex: 1; min-width: 0; height: 100%; background: #fff; }
.rt { font-size: 8px; }
.dj { font-family: "DejaVu Sans", sans-serif; }

.dock { width: 302px; flex: none; margin-top: 2px; border: 2px solid #333; border-width: 2px 0 0 2px; display: flex; flex-direction: column; padding-right: 3px; }
.dhead { height: 20px; flex: none; display: flex; align-items: center; border-bottom: 1px solid #ccc; padding: 0 6px 3px 0; gap: 9px; }
.dhead svg { width: 12px; height: 12px; }
.dhead > svg { margin-right: -9px; }
.dhead h2 { flex: 1; white-space: nowrap; }
.mini { width: 11px; height: 11px; border: 1px solid #666; border-radius: 2px; display: grid; place-items: center; }
.mini svg { width: 9px; height: 9px; }
.tabs { display: flex; align-items: flex-end; height: 25px; flex: none; padding-left: 5px; }
.tabs button { height: 20px; display: flex; align-items: center; gap: 2px; border: 1px solid #999; border-bottom: 0; padding: 0 2px; background: linear-gradient(#f0f0f0, #cfcfcf); white-space: nowrap; }
.tabs .cur { height: 23px; background: #fff; padding: 0 4px; margin-bottom: -1px; z-index: 1; }
.tabs svg { width: 9px; height: 9px; }
.sw { width: 8px; height: 8px; border: 1px solid #999; }
.sw.fill { border: 0; background: linear-gradient(135deg, #aac8e6, #eef4fa); }
.page { height: 255px; flex: none; margin: 0 2px 0 3px; border: 1px solid #999; background: #fff; padding: 7px 0 0 0; display: flex; flex-direction: column; gap: 4px; }
.row { display: flex; gap: 5px; flex: none; }
.row label, .row .lab { width: 102px; margin-right: -1px; text-align: right; align-self: center; flex: none; }
.h20 { height: 20px; } .h21 { height: 21px; } .h29 { height: 30px; }
.row .line + .spin { margin-left: -5px; }
.row .dash + .dash { margin-left: -1px; }
.opt { width: 29px; height: 29px; border: 1px solid #777; border-radius: 3px; background: linear-gradient(#f4f4f4, #ccc); display: grid; place-items: center; }
.opt svg { width: 25px; height: 25px; }
.sel { border-color: #2c5a80; background: linear-gradient(#b5ddf2, #5fa4d4); }
.sel.light { background: linear-gradient(#dff2fb, #8cc6e8); }
.slider { height: 22px; flex: none; margin: 3px 3px 0 3px; display: flex; border: 1px solid #aaa; background: #fff; align-items: stretch; }
.slider label { flex: 1; padding-left: 4px; align-self: center; }
.slider input { width: 60px; text-align: right; padding-right: 4px; }
.full label, .full input { align-self: stretch; background: #b4c2d0; line-height: 19px; border-bottom: 1px solid #111; }
.full input { border-right: 1px solid #111; padding-right: 1px; margin-right: 2px; }
.dtab { height: 18px; flex: none; margin: 8px 0 0 1px; border: 1px solid #777; border-radius: 1px; display: flex; align-items: center; gap: 2px; padding: 0 6px 0 1px; text-align: left; background: linear-gradient(#fdfdfd, #d8d8d8); }
.dtab + .dtab { margin-top: 3px; }
.act { background: linear-gradient(#d0ecf9, #9ed4f0 50%, #5fb4e0); border-color: #2c628b; }
.dtab svg { width: 12px; height: 12px; }
.dtab span { flex: 1; }
.dtab b { border: 3px solid transparent; border-top: 0; border-bottom: 4px solid #222; }

.bar { width: 27px; flex: none; background: linear-gradient(90deg, #dde3f4, #cfd6ec); padding-top: 3px; overflow: hidden; border-right: 1px solid #eef1fa; }
.bar button { width: 26px; height: 23px; display: grid; place-items: center; }
.bar svg { width: 16px; height: 16px; }
.bar hr { margin: 5px 6px 6px; border: 0; height: 1px; background: #a8afc0; }
.bar .on { width: 24px; margin-left: 1px; }

.palette { flex: none; height: 17px; border-top: 2px solid #111; border-bottom: 3px solid #fafafa; padding-right: 10px; display: flex; }
.palette button { flex: 1; min-width: 0; }
.none { background: #fff; }
.none svg { width: 100%; height: 12px; }

.hscroll { flex: none; height: 15px; display: flex; align-items: center; padding: 1px 14px 1px 3px; background: #e9e9e9; }
.track { flex: 1; height: 13px; margin: 0 9px 0 7px; }
.thumb { width: 31.400%; height: 13px; border: 1px solid #999; border-radius: 2px; background: linear-gradient(#f8f8f8, #e4e4e4 50%, #cfcfcf); display: flex; justify-content: center; align-items: center; gap: 2px; }
.thumb i { width: 1px; height: 6px; background: #555; }
.al, .ar { border: 3px solid transparent; }
.al { border-left: 0; border-right: 4px solid #999; }
.ar { border-right: 0; border-left: 4px solid #111; }

footer { flex: none; height: 23px; display: flex; align-items: center; line-height: 12px; padding-bottom: 1px; font-size: 10px; }
.style { display: grid; grid-template: 11px 11px / 70px 67px; white-space: nowrap; }
.style dt, .style dd { line-height: 11px; }
.style .blue { background: #0808ff; }
footer .opac { width: 29px; height: 18px; }
footer .opac input { border-left: 0; }
.ico { width: 11px; margin-left: 1px; }
.ico svg { width: 11px; height: 11px; }
.layer { width: 68px; height: 21px; }
.layer select { font-weight: 700; }
footer p { flex: 1; margin-left: 5px; white-space: nowrap; }
.coords { display: grid; grid-template: 11px 11px / 20px 34px; border-left: 1px solid #999; padding-left: 3px; font-family: "DejaVu Sans Mono", monospace; line-height: 11px; }
.coords span:nth-child(even) { text-align: right; }
footer .coords + label { margin: 0 3px 0 8px; }
.zoom { height: 18px; font-size: 11px; }
.zoom input { padding-left: 5px; }
.grip { width: 12px; height: 10px; margin-left: 6px; background: radial-gradient(#bbb 1px, transparent 1px) 0 0/4px 4px; }
```
FILE: palette.js
```js
const swatches = (
  "000000 1a1a1a 333333 4d4d4d 666666 808080 999999 b3b3b3 cccccc e6e6e6 ececec f2f2f2 f9f9f9 ffffff " +
  "800000 ff0000 808000 ffff00 008000 00ff00 008080 00ffff 000080 0000ff 800080 ff00ff " +
  "2b0000 550000 800000 aa0000 d40000 ff0000 ff2a2a ff5555 ff8080 ffaaaa ffd5d5 " +
  "280b0b 501616 782121 a02c2c c83737 d35f5f de8787 e9afaf f4d7d7 " +
  "241c1c 483737 6c5353 916f6f ac9393 c8b7b7 e3dbdb " +
  "2b1100 552200 803300 aa4400 d45500 ff6600 ff7f2a ff9955 ffb380 ffccaa ffe6d5 " +
  "28170b 502d16 784421 a05a2c c87137 d38d5f deaa87 e9c6af f4e3d7 " +
  "241f1c 483e37 6c5d53 917c6f ac9d93 c8beb7 e3dedb " +
  "2b2200 554400 806600 aa8800 d4aa00 ffcc00 ffd42a ffdd55 ffe680 ffeeaa fff6d5 " +
  "28220b 504416 786721 a0892c c8ab37 d3bc5f decd87 e9ddaf f4eed7 " +
  "24221c 484537 6c6753 918a6f aca793 c8c4b7 e3e2db " +
  "222b00 445500 668000 88aa00 aad400 ccff00 d4ff2a ddff55 e5ff80 eeffaa f6ffd5 " +
  "22280b 445016 677821 89a02c abc837 bcd35f cdde87 dde9af eef4d7 " +
  "22241c 454837 676c53 8a916f a7ac93 c4c8b7 e2e3db 112b00"
).split(" ");
const palette = document.getElementById("palette");
for (const c of swatches) {
  const b = document.createElement("button");
  b.style.backgroundColor = "#" + c;
  b.setAttribute("aria-label", "#" + c);
  palette.append(b);
}
```
